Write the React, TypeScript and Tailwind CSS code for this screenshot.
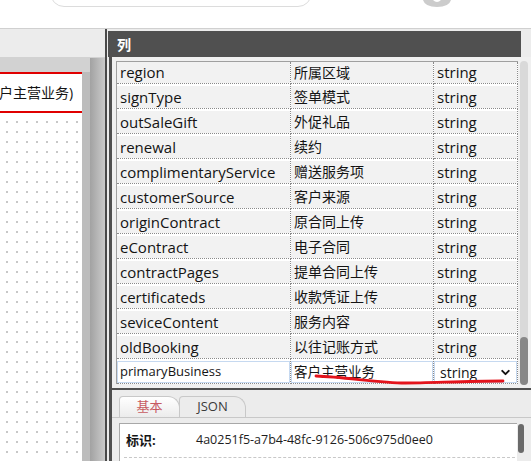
import { ChevronDown } from 'lucide-react';

type Row = { name: string; label: string; type: string };

const rows: Row[] = [
  { name: 'region', label: '所属区域', type: 'string' },
  { name: 'signType', label: '签单模式', type: 'string' },
  { name: 'outSaleGift', label: '外促礼品', type: 'string' },
  { name: 'renewal', label: '续约', type: 'string' },
  { name: 'complimentaryService', label: '赠送服务项', type: 'string' },
  { name: 'customerSource', label: '客户来源', type: 'string' },
  { name: 'originContract', label: '原合同上传', type: 'string' },
  { name: 'eContract', label: '电子合同', type: 'string' },
  { name: 'contractPages', label: '提单合同上传', type: 'string' },
  { name: 'certificateds', label: '收款凭证上传', type: 'string' },
  { name: 'seviceContent', label: '服务内容', type: 'string' },
  { name: 'oldBooking', label: '以往记账方式', type: 'string' },
];

function Cell({ first, text, cjk }: { first: boolean; text: string; cjk?: boolean }) {
  return (
    <div className="border-r border-b border-dotted border-[#8a8a8a] bg-white">
      <div
        className={
          first
            ? 'flex h-[21px] items-center bg-[#f2f2f2] pl-[3px]'
            : 'mt-[2px] flex h-[22px] items-center bg-[#f2f2f2] pl-[3px]'
        }
      >
        <span className={cjk ? 'text-[14px] leading-none' : 'text-[15px] leading-none'}>{text}</span>
      </div>
    </div>
  );
}

export default function App() {
  return (
    <div className="relative h-[461px] w-[531px] overflow-hidden bg-white font-['Open_Sans','Noto_Sans_CJK_SC',sans-serif] text-[#141414]">
      {/* top bar */}
      <div className="flex h-[29px] items-start overflow-hidden border-b border-[#d0d0d0] bg-white">
        <div className="-mt-[33px] ml-[50px] h-[40px] w-[262px] rounded-[14px] border border-[#dcdcdc]" />
        <svg width="28" height="8" viewBox="0 0 28 8" className="ml-[111px]">
          <path d="M0 0 Q2 7 14 7 Q26 7 28 0 Z" fill="#cccccc" />
          <path d="M10 0 Q14 4 18 0 Z" fill="#ffffff" />
        </svg>
      </div>

      <div className="flex h-[432px]">
        {/* left designer panel */}
        <div className="flex w-[105px] flex-col">
          <div className="h-[29px] border-b border-[#d2d2d2] bg-[#ececec]" />
          <div className="flex flex-1">
            <div className="w-[90px] bg-[#d2d2d2] pt-[14px]">
              <div className="flex h-full">
                <div className="flex w-[82px] flex-col bg-white">
                  <div className="flex h-[41px] items-center overflow-hidden whitespace-nowrap border-y-2 border-[#e00000] text-[14px]">
                    <span className="-ml-[1px]">户主营业务)</span>
                  </div>
                  <div className="flex-1 bg-[radial-gradient(circle,#a8a8a8_0.6px,transparent_0.9px)] bg-[length:10px_10px] bg-[position:2px_4px]" />
                </div>
                <div className="w-[8px] bg-[#bcbcbc]" />
              </div>
            </div>
            <div className="w-[15px] bg-gradient-to-r from-[#a2a2a2] to-[#cbcbcb]" />
          </div>
        </div>

        <div className="w-[2px] bg-[#4a4a4a]" />

        {/* right panel */}
        <div className="flex flex-1 flex-col bg-[#ececec]">
          <div className="ml-[1px] mt-[2px] flex h-[26px] w-[413px] items-center bg-[#505050] pl-[9px] text-[14px] font-bold text-white">
            列
          </div>
          <div className="flex flex-1">
            <div className="ml-[2px] w-[3px] bg-[#4f4f4f]" />
            <div className="flex flex-1 flex-col">
              <div className="flex h-[331px] bg-[#f0f0f0] pl-[4px] pt-[4px]">
                <div className="h-[323px] w-[402px] border-l border-t border-[#a0a0a0] bg-white">
                  <div className="grid grid-cols-[174px_143px_84px]">
                    {rows.map((r, i) => (
                      <div key={r.name} className="contents">
                        <Cell first={i === 0} text={r.name} />
                        <Cell first={i === 0} text={r.label} cjk />
                        <Cell first={i === 0} text={r.type} />
                      </div>
                    ))}
                    <div className="border-b border-r border-dotted border-[#8a8a8a] bg-white pt-[2px]">
                      <div className="flex h-[22px] items-center border border-[#c6d9f0] pl-[2px] text-[13px]">
                        primaryBusiness
                      </div>
                    </div>
                    <div className="border-b border-r border-dotted border-[#8a8a8a] bg-white pt-[2px]">
                      <div className="flex h-[22px] items-center border border-[#c6d9f0] pl-[2px] text-[13.5px]">
                        客户主营业务
                      </div>
                    </div>
                    <div className="border-b border-r border-dotted border-[#8a8a8a] bg-white pt-[2px]">
                      <div className="flex h-[22px] items-center justify-between border border-[#c6d9f0] pl-[5px] pr-[4px] text-[14px]">
                        <span>string</span>
                        <ChevronDown size={13} strokeWidth={3.5} color="#111" />
                      </div>
                    </div>
                  </div>
                </div>
                <div className="ml-[2px] flex h-[324px] w-[8px] flex-col justify-end rounded-[4px] bg-[#d9d9d9]">
                  <div className="h-[48px] rounded-[4px] bg-[#878787]" />
                </div>
              </div>
              <div className="h-[2px] bg-[#505050]" />

              {/* bottom properties panel */}
              <div className="flex flex-1 flex-col bg-[#ececec] pt-[6px]">
                <div className="flex h-[22px] items-end border-b border-[#c8c8c8] pl-[7px]">
                  <div className="flex h-[21px] w-[61px] items-center justify-center rounded-tl-[4px] rounded-tr-[12px] border border-b-0 border-[#c8c8c8] bg-gradient-to-b from-white to-[#ececec] text-[13px] text-[#c75a62]">
                    基本
                  </div>
                  <div className="-ml-[1px] flex h-[21px] w-[67px] items-center justify-center rounded-tl-[4px] rounded-tr-[12px] border border-b-0 border-[#c8c8c8] bg-[#ececec] text-[13px] text-[#3a3a3a]">
                    JSON
                  </div>
                </div>
                <div className="ml-[7px] mt-[5px] flex flex-1">
                  <div className="w-[398px] border-l border-t border-[#a8a8a8] bg-white pl-[4px] pr-[2px]">
                    <div className="flex h-[34px] items-center border-b border-dashed border-[#c8c8c8]">
                      <span className="w-[72px] pl-[2px] text-[13px] font-bold">标识:</span>
                      <span className="text-[12.5px] text-[#1e1e1e]">4a0251f5-a7b4-48fc-9126-506c975d0ee0</span>
                    </div>
                  </div>
                  <div className="ml-[1px] mt-[1px] h-[29px] w-[6px] rounded-[3px] bg-[#6a6a6a]" />
                </div>
              </div>
            </div>
          </div>
        </div>
      </div>

      {/* red annotation stroke */}
      <svg className="pointer-events-none absolute left-0 top-0" width="531" height="461" viewBox="0 0 531 461">
        <path
          d="M316 376 C 345 377, 380 383, 405 383 S 465 381, 503 381"
          fill="none"
          stroke="#e3141c"
          strokeWidth="2.8"
          strokeLinecap="round"
        />
      </svg>
    </div>
  );
}
